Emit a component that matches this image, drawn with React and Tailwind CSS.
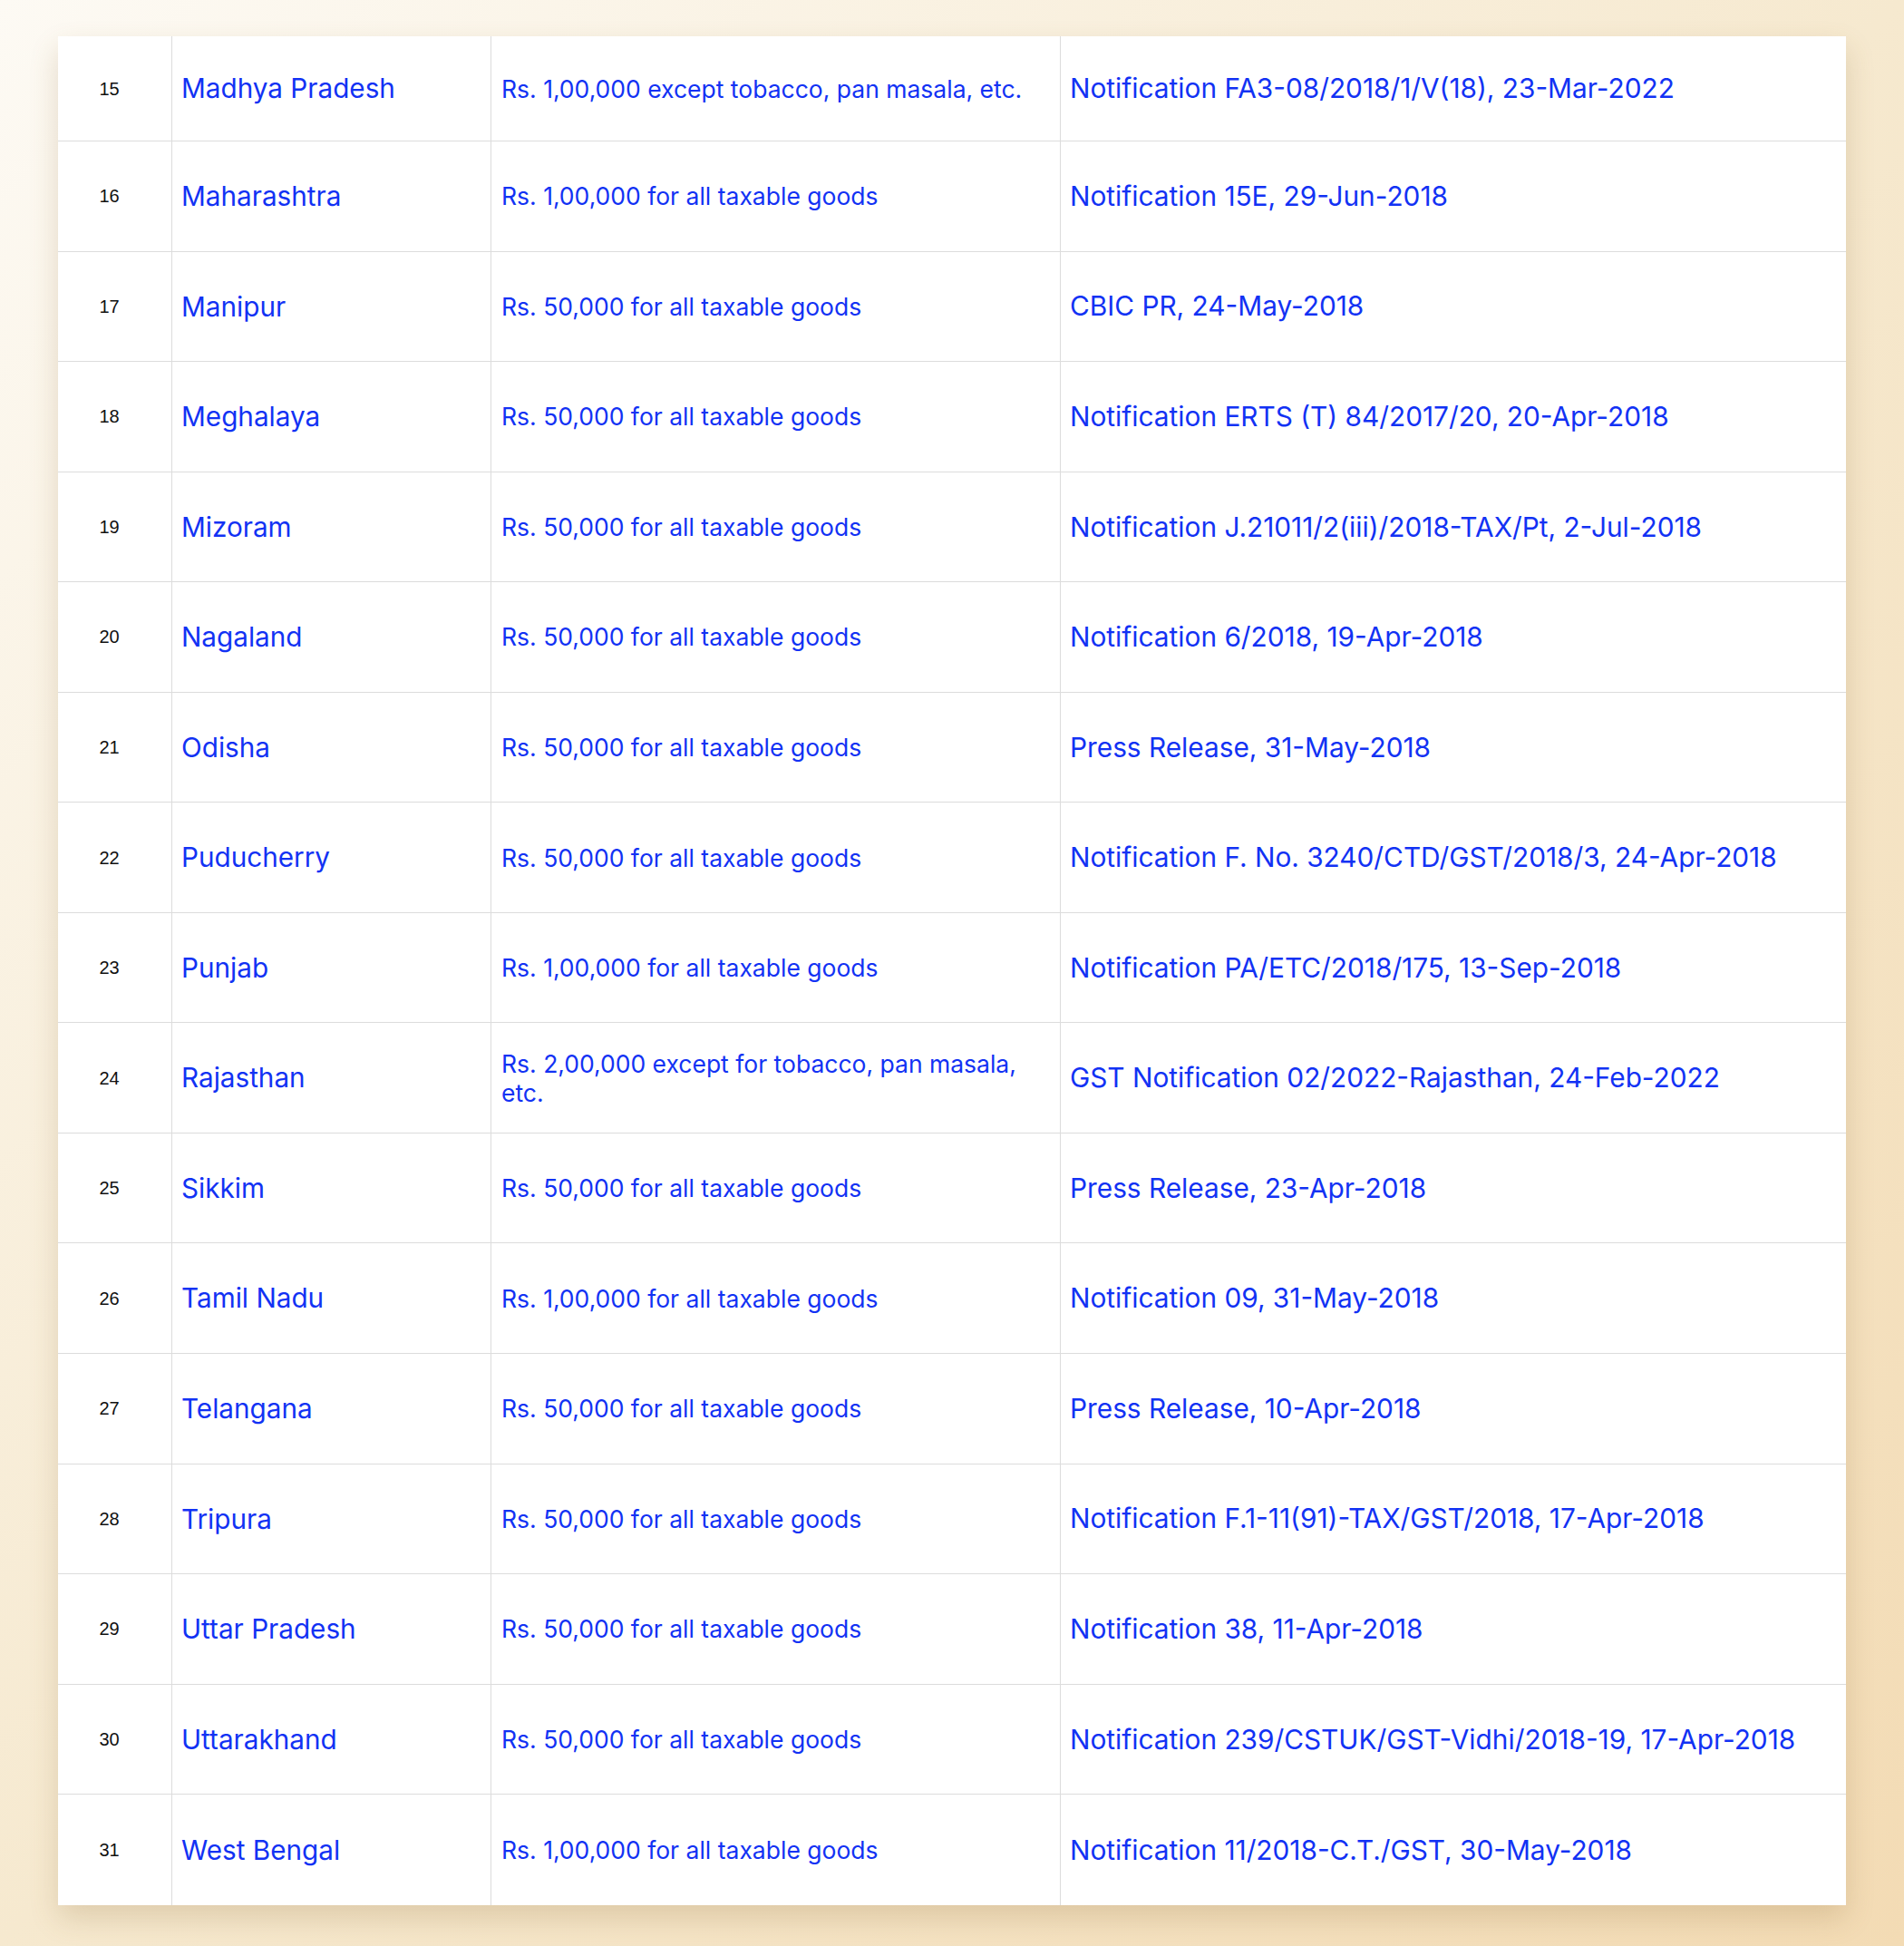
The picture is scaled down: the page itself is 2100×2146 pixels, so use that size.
const rows = [
  ["15", "Madhya Pradesh", "Rs. 1,00,000 except tobacco, pan masala, etc.", "Notification FA3-08/2018/1/V(18), 23-Mar-2022"],
  ["16", "Maharashtra", "Rs. 1,00,000 for all taxable goods", "Notification 15E, 29-Jun-2018"],
  ["17", "Manipur", "Rs. 50,000 for all taxable goods", "CBIC PR, 24-May-2018"],
  ["18", "Meghalaya", "Rs. 50,000 for all taxable goods", "Notification ERTS (T) 84/2017/20, 20-Apr-2018"],
  ["19", "Mizoram", "Rs. 50,000 for all taxable goods", "Notification J.21011/2(iii)/2018-TAX/Pt, 2-Jul-2018"],
  ["20", "Nagaland", "Rs. 50,000 for all taxable goods", "Notification 6/2018, 19-Apr-2018"],
  ["21", "Odisha", "Rs. 50,000 for all taxable goods", "Press Release, 31-May-2018"],
  ["22", "Puducherry", "Rs. 50,000 for all taxable goods", "Notification F. No. 3240/CTD/GST/2018/3, 24-Apr-2018"],
  ["23", "Punjab", "Rs. 1,00,000 for all taxable goods", "Notification PA/ETC/2018/175, 13-Sep-2018"],
  ["24", "Rajasthan", "Rs. 2,00,000 except for tobacco, pan masala, etc.", "GST Notification 02/2022-Rajasthan, 24-Feb-2022"],
  ["25", "Sikkim", "Rs. 50,000 for all taxable goods", "Press Release, 23-Apr-2018"],
  ["26", "Tamil Nadu", "Rs. 1,00,000 for all taxable goods", "Notification 09, 31-May-2018"],
  ["27", "Telangana", "Rs. 50,000 for all taxable goods", "Press Release, 10-Apr-2018"],
  ["28", "Tripura", "Rs. 50,000 for all taxable goods", "Notification F.1-11(91)-TAX/GST/2018, 17-Apr-2018"],
  ["29", "Uttar Pradesh", "Rs. 50,000 for all taxable goods", "Notification 38, 11-Apr-2018"],
  ["30", "Uttarakhand", "Rs. 50,000 for all taxable goods", "Notification 239/CSTUK/GST-Vidhi/2018-19, 17-Apr-2018"],
  ["31", "West Bengal", "Rs. 1,00,000 for all taxable goods", "Notification 11/2018-C.T./GST, 30-May-2018"],
];

export default function App() {
  return (
    <div className="min-h-screen w-full bg-linear-to-br from-[#fdfaf4] via-[#f6e9cf] to-[#f3dbb4] pt-[40px] px-[64px] pb-[45px]">
      <div className="bg-white shadow-[0_14px_30px_rgba(130,95,40,0.2)] font-['Inter',sans-serif] text-[#1232f4]">
        {rows.map(([num, state, limit, ref], i) => (
          <div
            key={num}
            className={
              "grid grid-cols-[126px_352px_628px_1fr] items-stretch " +
              (i === 0 ? "h-[116px] " : "h-[121.56px] ") +
              (i < rows.length - 1 ? "border-b border-[#dcdcdc]" : "")
            }
          >
            <div className="flex items-center justify-center pr-[12px] border-r border-[#dcdcdc] font-['Liberation_Sans',Arial,sans-serif] text-[20px] text-[#111]">
              {num}
            </div>
            <div className="flex items-center px-[10px] border-r border-[#dcdcdc] text-[29.7px]">
              {state}
            </div>
            <div className="flex items-center px-[11px] border-r border-[#dcdcdc] text-[26.5px] leading-[32px]">
              {limit}
            </div>
            <div className="flex items-center px-[10px] text-[29.8px]">
              {ref}
            </div>
          </div>
        ))}
      </div>
    </div>
  );
}
